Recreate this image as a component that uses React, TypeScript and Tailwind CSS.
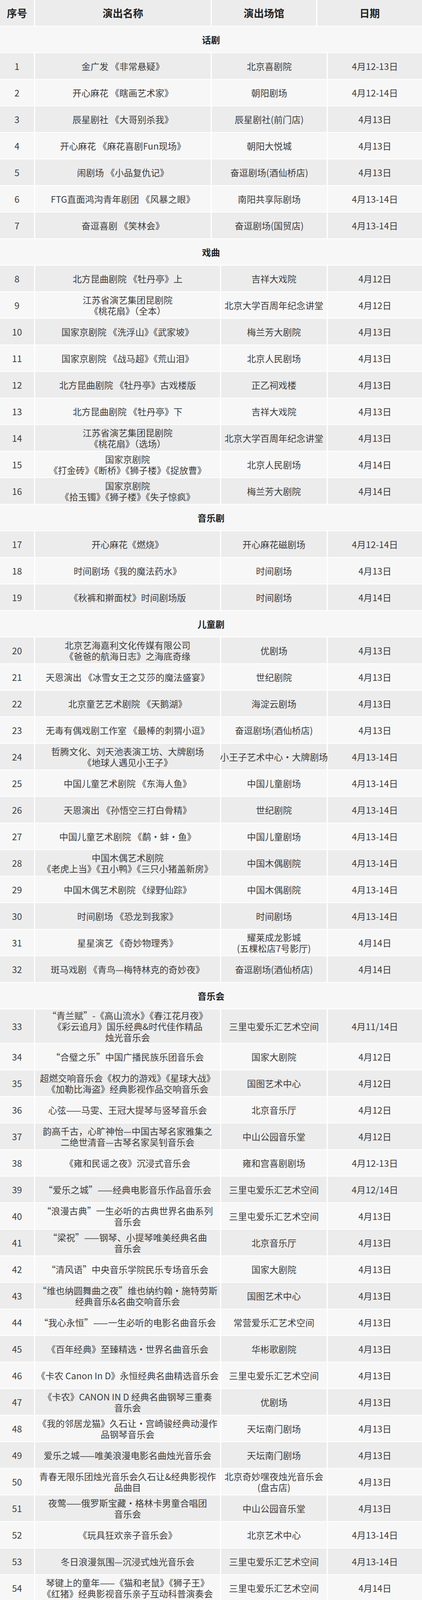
import React from 'react';

type Row = [string, string, string, string];

interface Section {
  title: string;
  wide?: boolean;
  rows: Row[];
}

const sections: Section[] = [
  {
    title: '话剧',
    wide: true,
    rows: [
      ['1', '金广发 《非常悬疑》', '北京喜剧院', '4月12-13日'],
      ['2', '开心麻花 《瞎画艺术家》', '朝阳剧场', '4月12-14日'],
      ['3', '辰星剧社 《大哥别杀我》', '辰星剧社(前门店)', '4月13日'],
      ['4', '开心麻花 《麻花喜剧Fun现场》', '朝阳大悦城', '4月13日'],
      ['5', '闹剧场 《小品复仇记》', '奋逗剧场(酒仙桥店)', '4月13日'],
      ['6', 'FTG直面鸿沟青年剧团 《风暴之眼》', '南阳共享际剧场', '4月13-14日'],
      ['7', '奋逗喜剧 《笑林会》', '奋逗剧场(国贸店)', '4月13-14日'],
    ],
  },
  {
    title: '戏曲',
    rows: [
      ['8', '北方昆曲剧院 《牡丹亭》上', '吉祥大戏院', '4月12日'],
      ['9', '江苏省演艺集团昆剧院\n《桃花扇》（全本）', '北京大学百周年纪念讲堂', '4月12日'],
      ['10', '国家京剧院 《洗浮山》《武家坡》', '梅兰芳大剧院', '4月13日'],
      ['11', '国家京剧院 《战马超》《荒山泪》', '北京人民剧场', '4月13日'],
      ['12', '北方昆曲剧院 《牡丹亭》古戏楼版', '正乙祠戏楼', '4月13日'],
      ['13', '北方昆曲剧院 《牡丹亭》下', '吉祥大戏院', '4月13日'],
      ['14', '江苏省演艺集团昆剧院\n《桃花扇》（选场）', '北京大学百周年纪念讲堂', '4月13日'],
      ['15', '国家京剧院\n《打金砖》《断桥》《狮子楼》《捉放曹》', '北京人民剧场', '4月14日'],
      ['16', '国家京剧院\n《拾玉镯》《狮子楼》《失子惊疯》', '梅兰芳大剧院', '4月14日'],
    ],
  },
  {
    title: '音乐剧',
    rows: [
      ['17', '开心麻花《燃烧》', '开心麻花磁剧场', '4月12-14日'],
      ['18', '时间剧场《我的魔法药水》', '时间剧场', '4月13日'],
      ['19', '《秋裤和擀面杖》时间剧场版', '时间剧场', '4月14日'],
    ],
  },
  {
    title: '儿童剧',
    rows: [
      ['20', '北京艺海嘉利文化传媒有限公司\n《爸爸的航海日志》之海底奇缘', '优剧场', '4月13日'],
      ['21', '天恩演出 《冰雪女王之艾莎的魔法盛宴》', '世纪剧院', '4月13日'],
      ['22', '北京童艺艺术剧院 《天鹅湖》', '海淀云剧场', '4月13日'],
      ['23', '无毒有偶戏剧工作室 《最棒的刺猬小逗》', '奋逗剧场(酒仙桥店)', '4月13日'],
      ['24', '哲腾文化、刘天池表演工坊、大牌剧场\n《地球人遇见小王子》', '小王子艺术中心·大牌剧场', '4月13-14日'],
      ['25', '中国儿童艺术剧院 《东海人鱼》', '中国儿童剧场', '4月13-14日'],
      ['26', '天恩演出 《孙悟空三打白骨精》', '世纪剧院', '4月13-14日'],
      ['27', '中国儿童艺术剧院 《鹬·蚌·鱼》', '中国儿童剧场', '4月13-14日'],
      ['28', '中国木偶艺术剧院\n《老虎上当》《丑小鸭》《三只小猪盖新房》', '中国木偶剧院', '4月13-14日'],
      ['29', '中国木偶艺术剧院 《绿野仙踪》', '中国木偶剧院', '4月13-14日'],
      ['30', '时间剧场 《恐龙到我家》', '时间剧场', '4月13-14日'],
      ['31', '星星演艺 《奇妙物理秀》', '耀莱成龙影城\n(五棵松店7号影厅)', '4月14日'],
      ['32', '斑马戏剧 《青鸟—梅特林克的奇妙夜》', '奋逗剧场(酒仙桥店)', '4月14日'],
    ],
  },
  {
    title: '音乐会',
    rows: [
      ['33', '“青兰赋”-《高山流水》《春江花月夜》\n《彩云追月》国乐经典&时代佳作精品\n烛光音乐会', '三里屯爱乐汇艺术空间', '4月11/14日'],
      ['34', '“合璧之乐”中国广播民族乐团音乐会', '国家大剧院', '4月12日'],
      ['35', '超燃交响音乐会《权力的游戏》《星球大战》\n《加勒比海盗》经典影视作品交响音乐会', '国图艺术中心', '4月12日'],
      ['36', '心弦——马雯、王冠大提琴与竖琴音乐会', '北京音乐厅', '4月12日'],
      ['37', '韵高千古，心旷神怡—中国古琴名家雅集之\n二绝世清音—古琴名家吴钊音乐会', '中山公园音乐堂', '4月12日'],
      ['38', '《雍和民谣之夜》沉浸式音乐会', '雍和宫喜剧剧场', '4月12-13日'],
      ['39', '“爱乐之城”——经典电影音乐作品音乐会', '三里屯爱乐汇艺术空间', '4月12/14日'],
      ['40', '“浪漫古典”一生必听的古典世界名曲系列\n音乐会', '三里屯爱乐汇艺术空间', '4月13日'],
      ['41', '“梁祝”——钢琴、小提琴唯美经典名曲\n音乐会', '北京音乐厅', '4月13日'],
      ['42', '“清风语”中央音乐学院民乐专场音乐会', '国家大剧院', '4月13日'],
      ['43', '“维也纳圆舞曲之夜”维也纳约翰·施特劳斯\n经典音乐&名曲交响音乐会', '国图艺术中心', '4月13日'],
      ['44', '“我心永恒”——一生必听的电影名曲音乐会', '常营爱乐汇艺术空间', '4月13日'],
      ['45', '《百年经典》至臻精选·世界名曲音乐会', '华彬歌剧院', '4月13日'],
      ['46', '《卡农 Canon In D》永恒经典名曲精选音乐会', '三里屯爱乐汇艺术空间', '4月13日'],
      ['47', '《卡农》CANON IN D 经典名曲钢琴三重奏\n音乐会', '优剧场', '4月13日'],
      ['48', '《我的邻居龙猫》久石让·宫崎骏经典动漫作\n品钢琴音乐会', '天坛南门剧场', '4月13日'],
      ['49', '爱乐之城——唯美浪漫电影名曲烛光音乐会', '天坛南门剧场', '4月13日'],
      ['50', '青春无限乐团烛光音乐会久石让&经典影视作\n品曲目', '北京奇妙嘿夜烛光音乐会\n(盘古店)', '4月13日'],
      ['51', '夜莺——俄罗斯宝藏·格林卡男童合唱团\n音乐会', '中山公园音乐堂', '4月13日'],
      ['52', '《玩具狂欢亲子音乐会》', '北京艺术中心', '4月13-14日'],
      ['53', '冬日浪漫氛围—沉浸式烛光音乐会', '三里屯爱乐汇艺术空间', '4月13-14日'],
      ['54', '琴键上的童年——《猫和老鼠》《狮子王》\n《红猪》经典影视音乐亲子互动科普演奏会', '三里屯爱乐汇艺术空间', '4月14日'],
      ['55', '“浪漫华章”刘沙、赵聪与中央芭蕾舞团\n交响乐团音乐会', '国家大剧院', '4月14日'],
      ['56', '《四月是你的谎言》——“公生”与“薰”的\n钢琴小提琴唯美经典音乐集', '国图艺术中心', '4月14日'],
      ['57', '《听见国潮》北京民族乐团室内乐系列之\n“影视留声机”', '北京音乐厅', '4月14日'],
      ['58', '交响版《天空之城》——久石让·宫崎骏经典\n动漫作品大型交响音乐会', '五棵松·爱乐汇艺术空\n间·都市音乐厅', '4月14日'],
      ['59', '听见国潮 Chinese music | ‘一生必听’国风\n经典名曲燃情音乐会', '三里屯爱乐汇艺术空间', '4月14日'],
    ],
  },
  {
    title: 'Livehouse',
    rows: [
      ['60', '「凡人歌」少年·明月·风马', 'MAO Livehouse 北京', '4月10日'],
      ['61', '「荒金时代」', '东市·OMNI CLUB', '4月11日'],
      ['62', '王菀之2024初回限定巡回音乐会', 'MAO Livehouse 北京', '4月11-12日'],
      ['63', '「“今声”·离人不归」《爱殇》《不染》\n《生生世世爱》绝美大热古风经典名曲live现\n场', '三里屯爱乐汇艺术空间', '4月12日'],
      ['64', 'SHORTPARIS短巴黎 China Tour', '疆进酒OMNI SPACE', '4月12日'],
      ['65', '岸部真明 吉他演奏会巡演', '福浪LiveHouse', '4月12日'],
      ['66', '沉默演讲2024巡演「内化」', '北京乐空间', '4月12日'],
      ['67', '重启乐队的夏天 摇滚乐派对', 'MAO Livehouse 北京', '4月12日'],
      ['68', '“爵”妙旅行—致敬大师•爵士经典\n（LIVE&BAR）', '三里屯爱乐汇艺术空间', '4月13日'],
      ['69', '「如瓮」石岩·二〇二四巡演', '北京乐空间', '4月13日'],
      ['70', '【太多演出】2024 鸟撞十五周年北京专场', '疆进酒OMNI SPACE', '4月13日'],
      ['71', '欧美流行夜 泰勒斯威夫特专场', 'MAO Livehouse 北京', '4月13日'],
      ['72', '【边远&本能實業】联合专场', '疆进酒OMNI SPACE', '4月14日'],
      ['73', '跳大海「爱有引力」2024巡演', 'MAO Livehouse 北京', '4月14日'],
      ['74', '王峥嵘2024巡演【不象艺术呈现】', '北京乐空间', '4月14日'],
      ['75', '银河出逃计划-CMJ个人巡演', '福浪LiveHouse', '4月14日'],
    ],
  },
  {
    title: '脱口秀',
    rows: [
      ['76', '大笑喜剧\u3000《工体爆笑专场》', '三里屯脱口秀俱乐部', '4月8-14日'],
      ['77', '波波笑剧场\u3000《爆笑单口喜剧》', '波波笑剧场(北京店)', '4月8-14日'],
      ['78', '魔脱喜剧\u3000《爆笑脱口秀喜剧大会》', '魔脱喜剧-三里屯SOHO店', '4月8-14日'],
      ['79', '喜剧部落\u3000《工体爆笑脱口秀专场》', '美都M影城\n(永利国际购物中心店)', '4月8-14日'],
      ['80', '大笑喜剧\u3000《即兴喜剧爆笑之夜精品秀》', '北京脱口秀空间剧场', '4月8-14日'],
      ['81', '大笑喜剧\u3000《即兴之夜精品秀》', '北京脱口秀剧场\n(世贸工三店)', '4月8-14日'],
      ['82', '大笑喜剧\u3000《三里屯脱口秀专场》', '三里屯艾米剧场', '4月8-14日'],
      ['83', '笑脱喜剧\u3000《脱口秀爱笑联盟专场》', '爱笑联盟剧场\n(三里屯SOHO店)', '4月8-14日'],
      ['84', '袋鼠喜剧\u3000《袋鼠喜剧·脱口秀开放麦》', '磁场南锣话剧剧场', '4月10-11日'],
      ['85', '喜番喜剧\u3000《酒吧爆笑脱口秀》', '喜番club', '4月10-14日'],
      ['86', '逗趣现场\u3000《逗趣现场脱口秀》', 'GG2077空间站\n(国贸商城店)', '4月12日'],
      ['87', '猫头鹰喜剧\n《不懂事儿》冰冰单口喜剧专场', 'NEST 巢空间', '4月13日'],
      ['88', '大笑喜剧\u3000《西直门脱口秀》', '枫蓝熙剧场', '4月13日'],
    ],
  },
  {
    title: '曲艺及其他',
    rows: [
      ['89', '老舍茶馆\u3000《老舍茶馆相声专场》', '老舍茶馆', '4月8-13日'],
      ['90', '二哈相声社\u3000《二哈相声》', '广茗阁茶楼', '4月8-14日'],
      ['91', '听海阁相声会馆\u3000《接梗店》', '听海阁相声会馆', '4月8-14日'],
      ['92', '嘻哈包袱铺\u3000《嘻哈包袱铺相声剧场》', '嘻哈包袱铺五棵松剧场', '4月8-14日'],
      ['93', '火家瓦社\u3000《评书连播》', '火家瓦社', '4月8-14日'],
      ['94', '本山传媒有限公司\u3000《北京刘老根大舞台》', '北京刘老根大舞台', '4月8-14日'],
      ['95', '老舍茶馆\u3000《四季北京.茶》', '老舍茶馆', '4月8-14日'],
      ['96', '三轮儿喜剧\u3000《三轮儿喜剧沉浸相声》', '火家瓦社', '4月12日'],
      ['97', '北京喜笑会\u3000《北京喜笑会相声专场》', '钟鼓巷剧场', '4月13日'],
      ['98', '大逗相声社\u3000《大逗相声专场》', '宣南剧场', '4月13日'],
      ['99', '火家瓦社\u3000《人人相声专场》', '火家瓦社', '4月13日'],
      ['100', '北京曲艺团\u3000《笑满京城》京味儿相声专场', '天坛南门剧场', '4月13日'],
      ['101', '德云社\u3000《德云社评书专场》', '三庆园', '4月13日'],
      ['102', '长城铁花表演队伍\u3000《长城铁花》', '康西不夜谷·长城铁花', '4月13日'],
      ['103', '北京曲艺团\u3000《北京记忆》鼓曲专场', '老舍茶馆', '4月14日'],
    ],
  },
];

function Lines({ text }: { text: string }) {
  return (
    <>
      {text.split('\n').map((line, i) => (
        <div key={i} className="whitespace-nowrap">
          {line}
        </div>
      ))}
    </>
  );
}

function shade(index: number) {
  return index % 2 === 0 ? 'bg-[#ececec]' : 'bg-[#f7f7f7]';
}

const cell = 'flex flex-col items-center justify-center text-center';

export default function App() {
  let index = 0;
  const rows: React.ReactNode[] = [];

  sections.forEach((section) => {
    index += 1;
    rows.push(
      <div
        key={`s-${section.title}`}
        className={`flex h-[66px] shrink-0 items-center justify-center font-bold text-[#222] ${shade(index)}`}
      >
        {section.title}
      </div>
    );

    section.rows.forEach(([no, name, venue, date]) => {
      index += 1;
      const bg = shade(index);
      const tall = name.split('\n').length > 2;
      rows.push(
        <div key={no} className={`flex shrink-0 gap-[3px] ${tall ? 'h-[86px]' : 'h-[66px]'}`}>
          <div className={`${cell} ${bg} w-[87px] shrink-0`}>{no}</div>
          <div className={`${cell} ${bg} shrink-0 ${section.wide ? 'w-[449px]' : 'w-[473px]'}`}>
            <Lines text={name} />
          </div>
          <div className={`${cell} ${bg} shrink-0 ${section.wide ? 'w-[294px]' : 'w-[270px]'}`}>
            <Lines text={venue} />
          </div>
          <div className={`${cell} ${bg} flex-1`}>{date}</div>
        </div>
      );
    });
  });

  index += 1;

  return (
    <div className="w-[1080px] bg-white font-['Noto_Sans_CJK_SC','Noto_Sans',sans-serif] text-[23px] leading-[28px] text-[#3d3d3d]">
      <div className="flex flex-col gap-[2px]">
        {/* Header */}
        <div className="flex h-[66px] shrink-0 gap-[3px] text-[26px] font-bold text-[#222]">
          <div className="flex w-[87px] shrink-0 items-center justify-center bg-[#ececec]">序号</div>
          <div className="flex w-[449px] shrink-0 items-center justify-center bg-[#ececec]">演出名称</div>
          <div className="flex w-[267px] shrink-0 items-center justify-center bg-[#ececec]">演出场馆</div>
          <div className="flex flex-1 items-center justify-center bg-[#ececec]">日期</div>
        </div>

        {rows}

        {/* Footnote */}
        <div className={`flex h-[58px] shrink-0 items-center px-[14px] ${shade(index)}`}>
          注：演出信息来源于票务平台，仅供参考，请以实际演出信息为准
        </div>
      </div>
    </div>
  );
}
